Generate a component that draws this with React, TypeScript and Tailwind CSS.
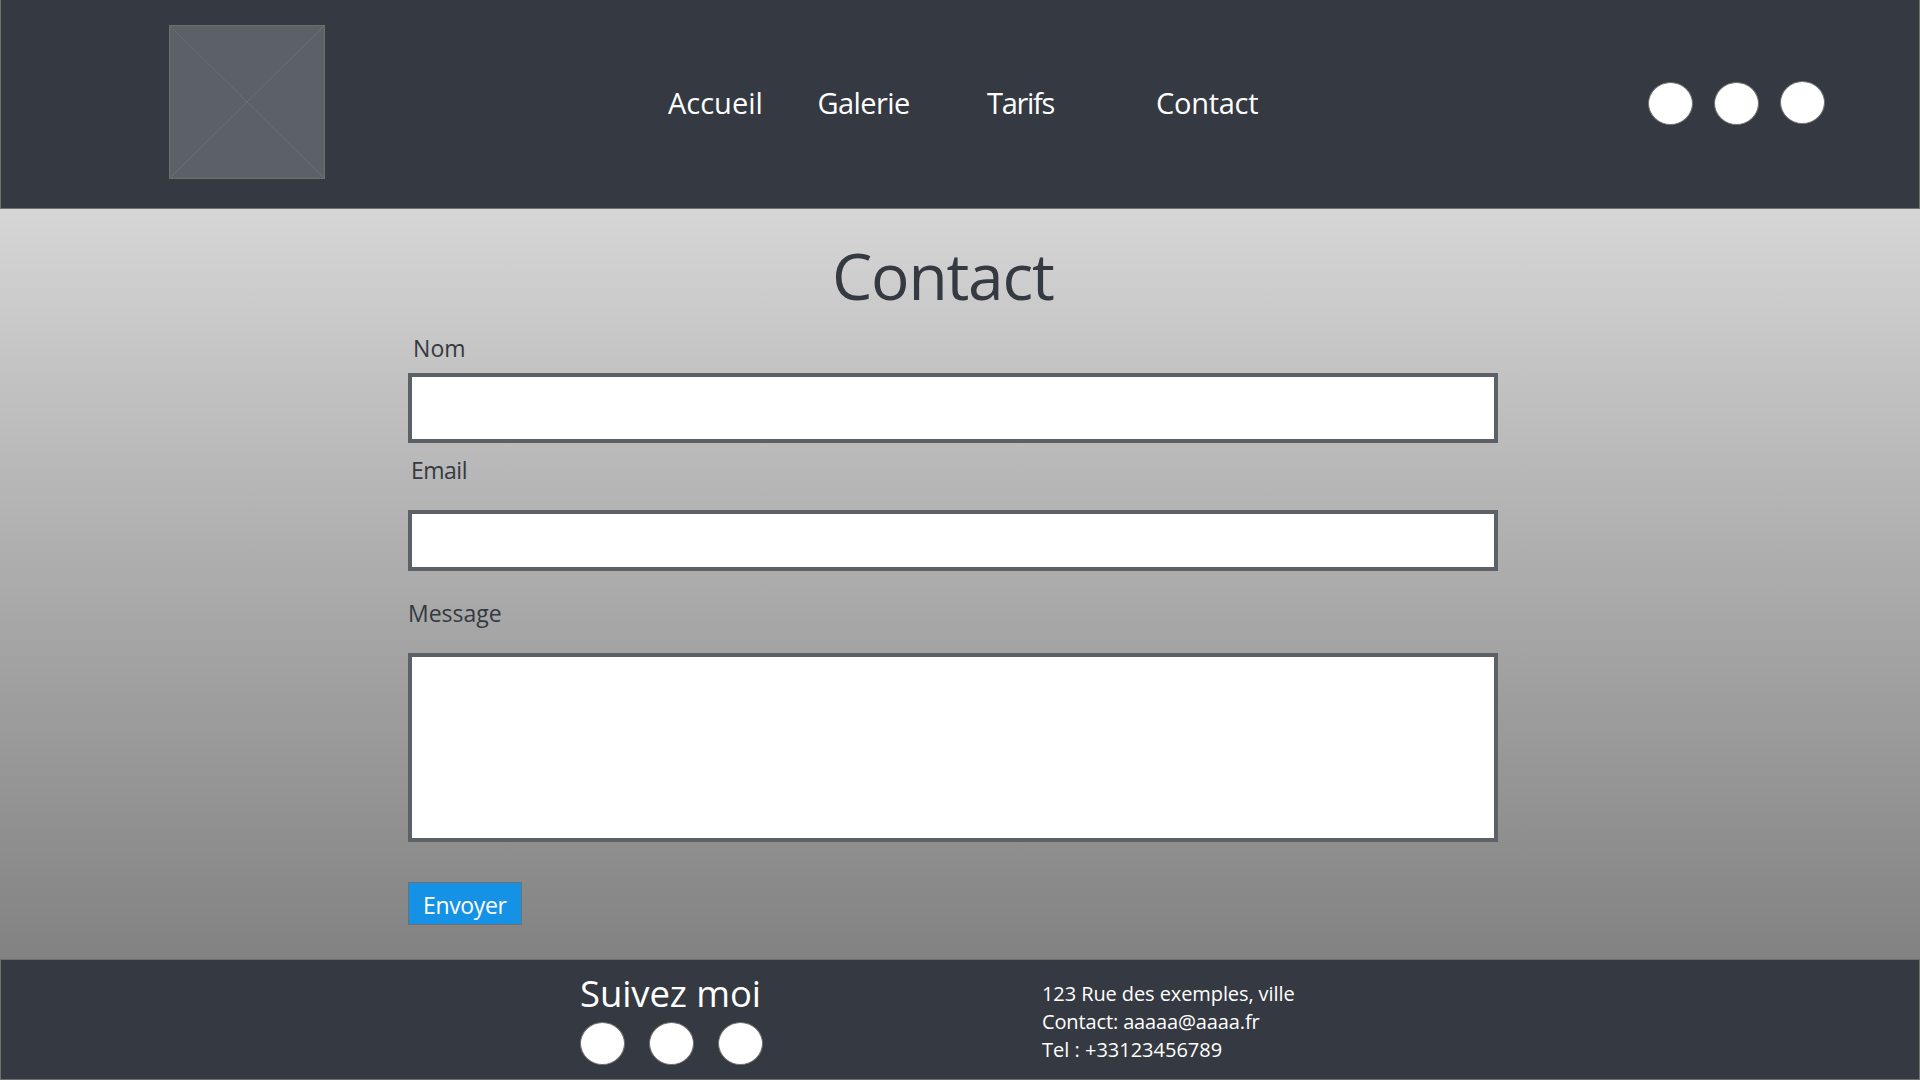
import type { ReactNode } from 'react';

function Dot({ className = '' }: { className?: string }) {
  return (
    <a
      href="#"
      className={`block h-[43px] w-[45px] shrink-0 rounded-[50%] border border-[#707070] bg-white ${className}`}
    />
  );
}

function Label({ htmlFor, className, children }: { htmlFor: string; className: string; children: ReactNode }) {
  return (
    <label htmlFor={htmlFor} className={`block text-[23px] leading-8 text-[#353941] ${className}`}>
      {children}
    </label>
  );
}

function Header() {
  return (
    <header className="flex h-[209px] shrink-0 items-start border-x border-b border-[#6e706e] bg-[#353941]">
      <svg
        className="mt-[25px] ml-[168px] h-[154px] w-[156px] shrink-0 bg-[#5c6067]"
        viewBox="0 0 156 154"
        fill="none"
        stroke="#6c706c"
      >
        <rect x="0.5" y="0.5" width="155" height="153" />
        <path d="M0.5 0.5L155.5 153.5M155.5 0.5L0.5 153.5" />
      </svg>
      <nav className="mt-[83px] ml-[343px] flex text-[29px] leading-10 text-white">
        <a href="#" className="w-[149.5px]">Accueil</a>
        <a href="#" className="w-[169.5px] tracking-[-0.57px]">Galerie</a>
        <a href="#" className="w-[169px] tracking-[-1.3px]">Tarifs</a>
        <a href="#" className="tracking-[-0.27px]">Contact</a>
      </nav>
      <div className="mt-[81px] mr-[94px] ml-auto flex gap-[21px]">
        <Dot className="mt-px" />
        <Dot className="mt-px" />
        <Dot />
      </div>
    </header>
  );
}

function ContactForm() {
  return (
    <main className="flex-1 bg-linear-to-b from-[#d6d6d6] to-[#828282] pl-[408px]">
      <h1 className="pt-[27px] pl-[424px] text-[64px] leading-[80px] tracking-[-1.2px] text-[#353941]">
        Contact
      </h1>
      <form className="flex w-[1090px] flex-col items-start">
        <Label htmlFor="nom" className="mt-4 pl-[5px] tracking-[0.1px]">Nom</Label>
        <input id="nom" className="mt-[9px] h-[70px] w-full border-4 border-[#5c6067] bg-white" />
        <Label htmlFor="email" className="mt-[11px] pl-[3px] tracking-[-0.5px]">Email</Label>
        <input id="email" className="mt-6 h-[61px] w-full border-4 border-[#5c6067] bg-white" />
        <Label htmlFor="message" className="mt-[26px]">Message</Label>
        <textarea
          id="message"
          className="mt-6 block h-[189px] w-full resize-none border-4 border-[#5c6067] bg-white"
        />
        <button
          type="button"
          className="mt-10 flex h-[43px] w-[114px] items-start border border-[#707070] bg-[#1592e6] pt-1.5 pl-3.5 text-[23px] leading-8 tracking-[-0.35px] text-white"
        >
          Envoyer
        </button>
      </form>
    </main>
  );
}

function Footer() {
  return (
    <footer className="flex h-[121px] shrink-0 items-start border border-[#6e706e] bg-[#353941] pl-[579px] text-white">
      <section className="w-[462px] pt-[11px]">
        <h2 className="text-[36.5px] leading-[44px] tracking-[-0.1px]">Suivez moi</h2>
        <div className="mt-[7px] flex gap-6">
          <Dot />
          <Dot />
          <Dot />
        </div>
      </section>
      <address className="pt-5 text-xl leading-7 not-italic">
        <p className="tracking-[-0.09px]">123 Rue des exemples, ville</p>
        <p className="tracking-[-0.13px]">Contact: aaaaa@aaaa.fr</p>
        <p>Tel : +33123456789</p>
      </address>
    </footer>
  );
}

export default function App() {
  return (
    <div className="flex h-[1080px] w-[1920px] flex-col overflow-hidden font-['Open_Sans','Noto_Sans',sans-serif]">
      <Header />
      <ContactForm />
      <Footer />
    </div>
  );
}
